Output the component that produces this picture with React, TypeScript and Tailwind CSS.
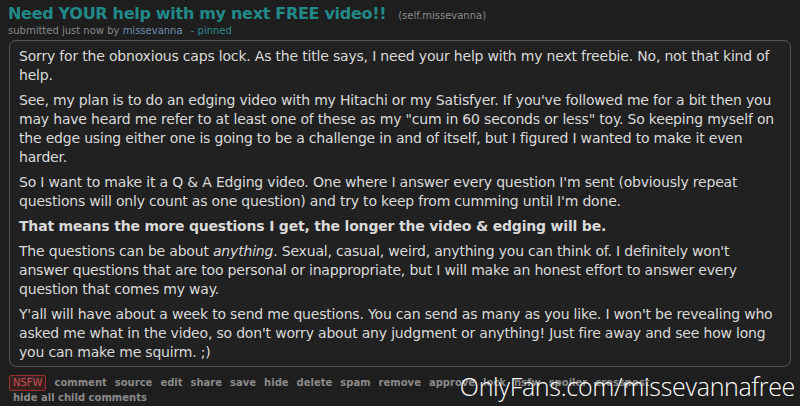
export default function App() {
  const actions = [
    "comment",
    "source",
    "edit",
    "share",
    "save",
    "hide",
    "delete",
    "spam",
    "remove",
    "approve",
    "lock",
    "nsfw",
    "spoiler",
    "crosspost",
  ];

  return (
    <div className="relative w-[800px] h-[406px] overflow-hidden bg-[#1e1e1e] font-['DejaVu_Sans',Verdana,sans-serif] text-[#d4d4d4]">
      {/* Title */}
      <div className="flex items-baseline gap-[12px] pl-[8px] pt-[3px]">
        <a className="text-[16px] leading-[22px] font-bold text-[#218a88] tracking-[-0.3px]">
          Need YOUR help with my next FREE video!!
        </a>
        <span className="text-[10px] text-[#8a8a8a]">(self.missevanna)</span>
      </div>
      <div className="pl-[8px] text-[10px] leading-[12px] text-[#8a8a8a]">
        submitted just now by <span className="text-[#6b8fb0]">missevanna</span>
        <span className="ml-[5px] text-[#2a8a8a]"> - pinned</span>
      </div>

      {/* Self text */}
      <div className="mx-[9px] mt-[3px] h-[327px] rounded-[7px] border border-[#555] bg-[#212121] pl-[9px] pr-[8px] pt-[6px] text-[14px] leading-[19px] text-[#dadada] tracking-[-0.19px]">
        <p className="mb-[6px]">
          Sorry for the obnoxious caps lock. As the title says, I need your help with my next freebie. No, not that kind of help.
        </p>
        <p className="mb-[6px]">
          See, my plan is to do an edging video with my Hitachi or my Satisfyer. If you've followed me for a bit then you may have heard me refer to at least one of these as my "cum in 60 seconds or less" toy. So keeping myself on the edge using either one is going to be a challenge in and of itself, but I figured I wanted to make it even harder.
        </p>
        <p className="mb-[6px]">
          So I want to make it a Q &amp; A Edging video. One where I answer every question I'm sent (obviously repeat questions will only count as one question) and try to keep from cumming until I'm done.
        </p>
        <p className="mb-[6px] font-bold">
          That means the more questions I get, the longer the video &amp; edging will be.
        </p>
        <p className="mb-[6px]">
          The questions can be about <em>anything</em>. Sexual, casual, weird, anything you can think of. I definitely won't answer questions that are too personal or inappropriate, but I will make an honest effort to answer every question that comes my way.
        </p>
        <p>
          Y'all will have about a week to send me questions. You can send as many as you like. I won't be revealing who asked me what in the video, so don't worry about any judgment or anything! Just fire away and see how long you can make me squirm. ;)
        </p>
      </div>

      {/* Action buttons */}
      <div className="mt-[8px] flex items-center gap-[8px] pl-[9px] text-[10px] font-bold leading-[14px] text-[#8a8a8a]">
        <span className="rounded-[2px] border border-[#9b2f2f] bg-[#3a1f1f] px-[3px] font-normal text-[#c05454]">NSFW</span>
        {actions.map((a) => (
          <span key={a}>{a}</span>
        ))}
      </div>
      <div className="pl-[13px] pt-[1px] text-[10px] font-bold leading-[12px] text-[#8a8a8a]">
        hide all child comments
      </div>

      {/* Watermark */}
      <div className="absolute right-[5px] bottom-[7px] font-['Open_Sans',sans-serif] text-[25px] font-light leading-none tracking-[-0.3px] text-white">
        OnlyFans.com/missevannafree
      </div>
    </div>
  );
}
